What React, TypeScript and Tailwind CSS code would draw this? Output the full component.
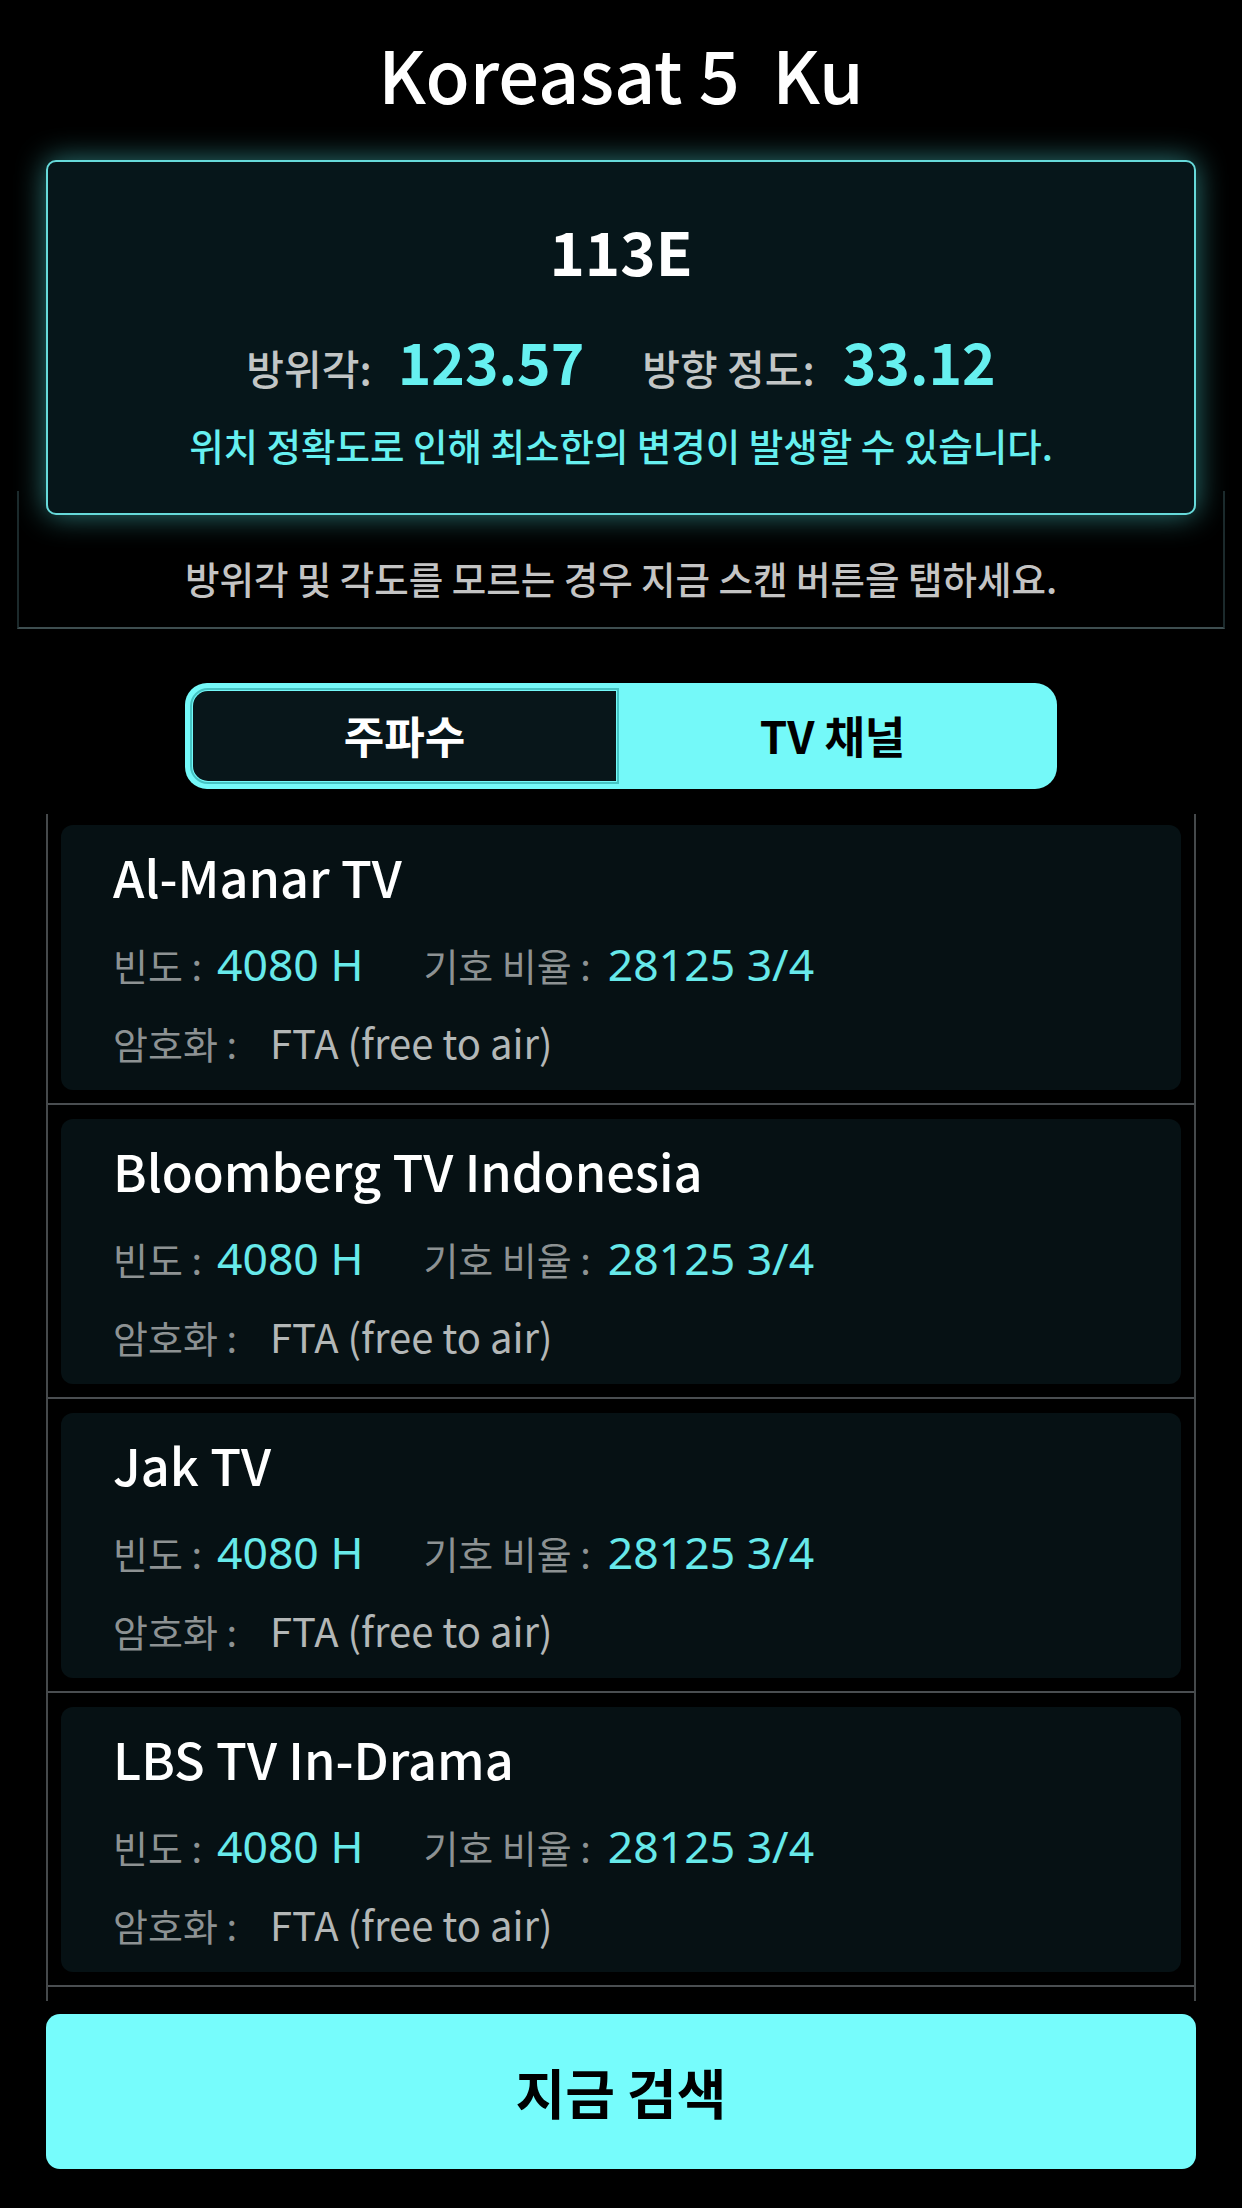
import React from "react"

const channels = [
    "Al-Manar TV",
    "Bloomberg TV Indonesia",
    "Jak TV",
    "LBS TV In-Drama",
]

const ChannelCard = ({ name, first }: { name: string; first: boolean }) => (
    <div
        className={
            first
                ? "px-[13px] pt-[11px] pb-[13px] border-b-2 border-[#4a4e51]"
                : "px-[13px] pt-[14px] pb-[13px] border-b-2 border-[#4a4e51]"
        }
    >
        <div className="h-[265px] rounded-[12px] bg-[#061114] pl-[52px]">
            <div className="pt-[15px] text-[50.5px] leading-[1.45] font-medium text-white">
                {name}
            </div>
            <div className="mt-[18px] flex items-baseline leading-[1.45]">
                <span className="text-[38px] text-[#8d9293]">빈도 :</span>
                <span className="ml-[15px] font-['Noto_Sans',sans-serif] text-[44.5px] text-[#67e9ea]">
                    4080 H
                </span>
                <span className="ml-[60px] text-[38px] text-[#8d9293]">
                    기호 비율 :
                </span>
                <span className="ml-[17px] font-['Noto_Sans',sans-serif] text-[44.5px] text-[#67e9ea]">
                    28125 3/4
                </span>
            </div>
            <div className="mt-[17px] flex items-baseline leading-[1.45]">
                <span className="text-[38px] text-[#8d9293]">암호화 :</span>
                <span className="ml-[33px] text-[40px] text-[#b3b7b7]">
                    FTA (free to air)
                </span>
            </div>
        </div>
    </div>
)

const App = () => {
    return (
        <div className="w-[1242px] h-[2208px] overflow-hidden bg-black flex flex-col font-['Noto_Sans_CJK_KR','Noto_Sans',sans-serif]">
            <div className="h-[160px] shrink-0 pt-[21px] text-center text-[72px] leading-[1.45] font-medium text-white">
                Koreasat 5&nbsp; Ku
            </div>

            {/* info panel */}
            <div className="relative z-10 mx-[46px] h-[355px] shrink-0 rounded-[10px] border-2 border-[#66dada] bg-[#06161a] shadow-[0_0_30px_rgba(80,220,220,0.55)] flex flex-col items-center">
                <div className="mt-[44px] text-[60px] leading-[1.45] font-semibold text-white">
                    113E
                </div>
                <div className="mt-[26px] flex items-baseline leading-[1.45]">
                    <span className="text-[41px] font-medium text-[#c2c6c6]">
                        방위각:
                    </span>
                    <span className="ml-[26px] text-[57px] font-semibold text-[#66f0f0]">
                        123.57
                    </span>
                    <span className="ml-[58px] text-[41px] font-medium text-[#c2c6c6]">
                        방향 정도:
                    </span>
                    <span className="ml-[28px] text-[57px] font-semibold text-[#66f0f0]">
                        33.12
                    </span>
                </div>
                <div className="mt-[16px] text-[37.5px] leading-[1.45] font-medium text-[#66f0f0]">
                    위치 정확도로 인해 최소한의 변경이 발생할 수 있습니다.
                </div>
            </div>

            {/* hint under the panel */}
            <div className="-mt-[24px] mx-[17px] shrink-0 border-x-2 border-b-2 border-x-[#1c2a2c] border-b-[#3e4e50] pt-[60px] pb-[22px] text-center text-[37.5px] leading-[1.45] font-medium text-[#c4c4c4]">
                방위각 및 각도를 모르는 경우 지금 스캔 버튼을 탭하세요.
            </div>

            {/* tabs */}
            <div className="mt-[54px] mx-auto w-[872px] h-[106px] shrink-0 rounded-[22px] bg-[#74f9f9] p-[8px] flex">
                <div className="w-[423px] rounded-l-[15px] bg-[#08161a] outline-2 outline-offset-[1px] outline-[#45c4c4] flex items-center justify-center text-[44px] leading-[1.45] font-bold text-white">
                    주파수
                </div>
                <div className="flex-1 flex items-center justify-center text-[44px] leading-[1.45] font-bold text-black">
                    TV 채널
                </div>
            </div>

            {/* channel list */}
            <div className="mt-[25px] mx-[46px] h-[1187px] shrink-0 overflow-hidden border-x-2 border-[#45494b]">
                {channels.map((name, i) => (
                    <ChannelCard key={name} name={name} first={i === 0} />
                ))}
            </div>

            <button className="mt-[13px] mx-[46px] h-[155px] shrink-0 rounded-[14px] bg-[#76fcfc] text-[54px] leading-[1.45] font-bold text-black">
                지금 검색
            </button>
        </div>
    )
}

export default App
